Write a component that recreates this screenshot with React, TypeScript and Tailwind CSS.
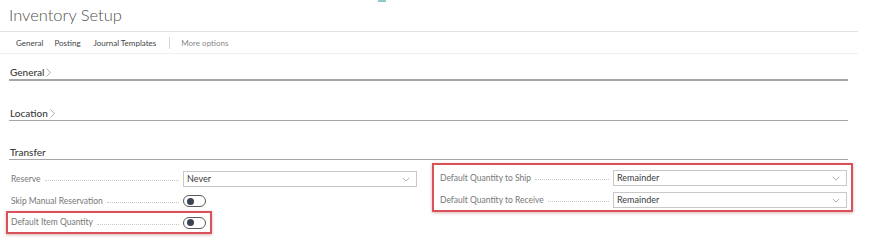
import { ReactNode } from 'react'

const font = { fontFamily: 'Lato, "Open Sans", Arial, sans-serif' }

function Chevron() {
  return (
    <svg viewBox="0 0 10 6" className="w-[8px] h-[5px]" fill="none" stroke="#9a9a9a" strokeWidth="1">
      <path d="M1 1 5 5 9 1" />
    </svg>
  )
}

function Select({ value }: { value: string }) {
  return (
    <div className="w-[234px] h-[16px] border border-[#c8c8c8] bg-white flex items-center justify-between pl-[3px] pr-[6px]">
      <span className="text-[9px] text-[#3a3a3a]">{value}</span>
      <Chevron />
    </div>
  )
}

function Toggle() {
  return (
    <div className="w-[23px] h-[12px] rounded-full border border-[#5a5a5a] bg-white flex items-center pl-[3px]">
      <div className="w-[7px] h-[7px] rounded-full bg-[#3b4252]" />
    </div>
  )
}

function Field({ label, width, children }: { label: string; width: number; children: ReactNode }) {
  return (
    <div className="flex items-center h-[18px]">
      <div className="flex items-center" style={{ width }}>
        <span className="text-[8.5px] text-[#777] whitespace-nowrap">{label}</span>
        <span className="flex-1 mx-[4px] mt-[3px] border-b border-dotted border-[#c8c8c8]" />
      </div>
      {children}
    </div>
  )
}

function SectionHeader({ title, chevron, thick }: { title: string; chevron?: boolean; thick?: boolean }) {
  return (
    <div
      className={
        'ml-[9px] w-[839px] flex items-center gap-[2px] pl-[1px] ' +
        (thick ? 'h-[17px] border-b-2 border-[#a6a6a6]' : 'h-[16px] border-b border-[#a6a6a6]')
      }
    >
      <span className="text-[10px] font-medium text-[#3a3a3a] leading-[14px]">{title}</span>
      {chevron && (
        <svg viewBox="0 0 5 9" className="w-[5px] h-[9px] mt-[1px]" fill="none" stroke="#999" strokeWidth="0.8">
          <path d="M0.5 0.5 4.5 4.5 0.5 8.5" />
        </svg>
      )}
    </div>
  )
}

export default function App() {
  return (
    <div className="relative w-[896px] h-[252px] bg-white overflow-hidden" style={font}>
      <div className="absolute left-[378px] top-0 w-[8px] h-[2px] bg-[#8fc9c4]" />

      <div className="h-[31px] pl-[9px] pt-[3px]">
        <h1 className="text-[16.5px] font-light text-[#505050] leading-[24px]">Inventory Setup</h1>
      </div>

      <nav className="w-[858px] h-[23px] border-t border-[#e3e3e3] border-b border-b-[#f0f0f0] flex items-center pl-[16px] text-[8px] text-[#444]">
        <span>General</span>
        <span className="ml-[11px]">Posting</span>
        <span className="ml-[13px]">Journal Templates</span>
        <span className="ml-[13px] w-px h-[12px] bg-[#d6d6d6]" />
        <span className="ml-[11px] text-[#888]">More options</span>
      </nav>

      <div className="mt-[10px]">
        <SectionHeader title="General" chevron thick />
      </div>
      <div className="mt-[24px]">
        <SectionHeader title="Location" chevron />
      </div>
      <div className="mt-[23px]">
        <SectionHeader title="Transfer" />
      </div>

      <div className="flex pl-[6px]">
        <div className="w-[411px] flex flex-col">
          <div className="mt-[10px] pl-[5px]">
            <Field label="Reserve" width={172}>
              <Select value="Never" />
            </Field>
          </div>
          <div className="mt-[4px] pl-[5px]">
            <Field label="Skip Manual Reservation" width={172}>
              <Toggle />
            </Field>
          </div>
          <div className="mt-[1px] w-[206px] h-[23px] border-2 border-[#d9525a] shadow-[0_1px_3px_rgba(150,40,40,0.35)] flex items-center pl-[3px]">
            <Field label="Default Item Quantity" width={172}>
              <Toggle />
            </Field>
          </div>
        </div>

        <div className="ml-[15px] mt-[3px] w-[421px] h-[49px] border-2 border-[#d9525a] shadow-[0_1px_3px_rgba(150,40,40,0.35)] flex flex-col pt-[4px] pl-[6px] gap-[4px]">
          <Field label="Default Quantity to Ship" width={173}>
            <Select value="Remainder" />
          </Field>
          <Field label="Default Quantity to Receive" width={173}>
            <Select value="Remainder" />
          </Field>
        </div>
      </div>
    </div>
  )
}
